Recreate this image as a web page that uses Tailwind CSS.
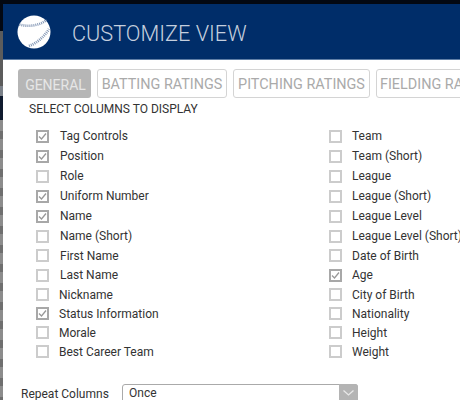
<!DOCTYPE html>
<html>
<head>
<meta charset="utf-8">
<script src="https://cdn.jsdelivr.net/npm/@tailwindcss/browser@4"></script>
</head>
<body class="m-0 bg-[#030812]">
<div class="w-[460px] h-[400px] overflow-hidden bg-[#030812] flex font-['Roboto',sans-serif]">
  <div class="w-[3px] h-[400px] shrink-0 flex flex-col">
    <div class="h-[31px] bg-[#030812]"></div>
    <div class="h-[55px] bg-[#5c5c5c]"></div>
    <div class="h-[10px] bg-[#7a8088]"></div>
    <div class="h-[24px] bg-[#101b2e]"></div>
    <div class="flex-1 bg-[repeating-linear-gradient(#8c8c8c_0,#8c8c8c_11px,#6f6f6f_11px,#6f6f6f_19px)]"></div>
  </div>
  <div class="pt-1 w-[457px] h-[400px] flex flex-col">
    <div class="h-[56px] shrink-0 bg-[#002d69] border-b border-[#5f7ea6] flex items-center pl-[14px]">
      <svg width="34" height="34" viewBox="0 0 34 34" class="shrink-0 mt-[1px]">
        <circle cx="17" cy="17" r="16.5" fill="#ffffff"/>
        <path d="M2.5 9.5 C11 12 22 11 29.5 5" fill="none" stroke="#8296b4" stroke-width="2.6" stroke-dasharray="1 1"/>
        <path d="M12 31 C20 28 27 22 32 14" fill="none" stroke="#8296b4" stroke-width="2.8" stroke-dasharray="1 1"/>
      </svg>
      <div class="ml-[21px] pt-[5px] text-[21.7px] leading-none text-[#c5cfde] font-light whitespace-nowrap">CUSTOMIZE VIEW</div>
    </div>
    <div class="flex-1 bg-white relative">
      <div class="pl-[15px] pt-[9px] flex gap-[6px] whitespace-nowrap text-[14.4px] leading-none text-[#aaaaaa]">
        <div class="h-[29px] w-[73px] shrink-0 rounded-[3px] bg-[#b6b6b6] text-[#e6e6e6] flex items-center justify-center pt-[3px] pl-[2px] text-[14px]">GENERAL</div>
        <div class="h-[29px] w-[130px] shrink-0 rounded-[3px] border border-[#d4d4d4] flex items-center justify-center pt-[3px]">BATTING RATINGS</div>
        <div class="h-[29px] w-[137px] shrink-0 rounded-[3px] border border-[#d4d4d4] flex items-center justify-center pt-[3px]">PITCHING RATINGS</div>
        <div class="h-[29px] w-[131px] shrink-0 rounded-[3px] border border-[#d4d4d4] flex items-center pl-[3px] pt-[3px]">FIELDING RATINGS</div>
      </div>
      <div class="pl-[26px] pt-[4px] text-[12px] leading-[15px] text-[#333333] whitespace-nowrap">SELECT COLUMNS TO DISPLAY</div>
      <div class="mt-[9px] flex text-[12px] leading-[20px] text-[#333333] whitespace-nowrap">
        <div class="w-[326px] pl-[33px] shrink-0 flex flex-col">
          <div class="h-[20px] flex items-center gap-[11px]"><span class="w-[13px] h-[13px] shrink-0 border-2 border-[#a8a8a8] flex items-center justify-center"><svg width="9" height="9" viewBox="0 0 9 9"><path d="M1 4.5 L3.5 7 L8 1.5" fill="none" stroke="#999999" stroke-width="1.3"/></svg></span>Tag Controls</div>
          <div class="h-[20px] flex items-center gap-[11px]"><span class="w-[13px] h-[13px] shrink-0 border-2 border-[#a8a8a8] flex items-center justify-center"><svg width="9" height="9" viewBox="0 0 9 9"><path d="M1 4.5 L3.5 7 L8 1.5" fill="none" stroke="#999999" stroke-width="1.3"/></svg></span>Position</div>
          <div class="h-[20px] flex items-center gap-[11px]"><span class="w-[13px] h-[13px] shrink-0 border-2 border-[#cccccc]"></span>Role</div>
          <div class="h-[20px] flex items-center gap-[11px]"><span class="w-[13px] h-[13px] shrink-0 border-2 border-[#a8a8a8] flex items-center justify-center"><svg width="9" height="9" viewBox="0 0 9 9"><path d="M1 4.5 L3.5 7 L8 1.5" fill="none" stroke="#999999" stroke-width="1.3"/></svg></span>Uniform Number</div>
          <div class="h-[20px] flex items-center gap-[11px]"><span class="w-[13px] h-[13px] shrink-0 border-2 border-[#a8a8a8] flex items-center justify-center"><svg width="9" height="9" viewBox="0 0 9 9"><path d="M1 4.5 L3.5 7 L8 1.5" fill="none" stroke="#999999" stroke-width="1.3"/></svg></span>Name</div>
          <div class="h-[20px] flex items-center gap-[11px]"><span class="w-[13px] h-[13px] shrink-0 border-2 border-[#cccccc]"></span>Name (Short)</div>
          <div class="h-[19px] flex items-center gap-[11px]"><span class="w-[13px] h-[13px] shrink-0 border-2 border-[#cccccc]"></span>First Name</div>
          <div class="h-[20px] flex items-center gap-[11px]"><span class="w-[13px] h-[13px] shrink-0 border-2 border-[#cccccc]"></span>Last Name</div>
          <div class="h-[19px] flex items-center gap-[10px]"><span class="w-[13px] h-[13px] shrink-0 border-2 border-[#cccccc]"></span>Nickname</div>
          <div class="h-[19px] flex items-center gap-[10px]"><span class="w-[13px] h-[13px] shrink-0 border-2 border-[#a8a8a8] flex items-center justify-center"><svg width="9" height="9" viewBox="0 0 9 9"><path d="M1 4.5 L3.5 7 L8 1.5" fill="none" stroke="#999999" stroke-width="1.3"/></svg></span>Status Information</div>
          <div class="h-[19px] flex items-center gap-[10px]"><span class="w-[13px] h-[13px] shrink-0 border-2 border-[#cccccc]"></span>Morale</div>
          <div class="h-[19px] flex items-center gap-[10px]"><span class="w-[13px] h-[13px] shrink-0 border-2 border-[#cccccc]"></span>Best Career Team</div>
        </div>
        <div class="flex-1 flex flex-col">
          <div class="h-[20px] flex items-center gap-[10px]"><span class="w-[13px] h-[13px] shrink-0 border-2 border-[#cccccc]"></span>Team</div>
          <div class="h-[20px] flex items-center gap-[10px]"><span class="w-[13px] h-[13px] shrink-0 border-2 border-[#cccccc]"></span>Team (Short)</div>
          <div class="h-[20px] flex items-center gap-[10px]"><span class="w-[13px] h-[13px] shrink-0 border-2 border-[#cccccc]"></span>League</div>
          <div class="h-[20px] flex items-center gap-[10px]"><span class="w-[13px] h-[13px] shrink-0 border-2 border-[#cccccc]"></span>League (Short)</div>
          <div class="h-[20px] flex items-center gap-[10px]"><span class="w-[13px] h-[13px] shrink-0 border-2 border-[#cccccc]"></span>League Level</div>
          <div class="h-[20px] flex items-center gap-[10px]"><span class="w-[13px] h-[13px] shrink-0 border-2 border-[#cccccc]"></span>League Level (Short)</div>
          <div class="h-[19px] flex items-center gap-[10px]"><span class="w-[13px] h-[13px] shrink-0 border-2 border-[#cccccc]"></span>Date of Birth</div>
          <div class="h-[20px] flex items-center gap-[10px]"><span class="w-[13px] h-[13px] shrink-0 border-2 border-[#a8a8a8] flex items-center justify-center"><svg width="9" height="9" viewBox="0 0 9 9"><path d="M1 4.5 L3.5 7 L8 1.5" fill="none" stroke="#999999" stroke-width="1.3"/></svg></span>Age</div>
          <div class="h-[19px] flex items-center gap-[10px]"><span class="w-[13px] h-[13px] shrink-0 border-2 border-[#cccccc]"></span>City of Birth</div>
          <div class="h-[19px] flex items-center gap-[10px]"><span class="w-[13px] h-[13px] shrink-0 border-2 border-[#cccccc]"></span>Nationality</div>
          <div class="h-[19px] flex items-center gap-[10px]"><span class="w-[13px] h-[13px] shrink-0 border-2 border-[#cccccc]"></span>Height</div>
          <div class="h-[19px] flex items-center gap-[10px]"><span class="w-[13px] h-[13px] shrink-0 border-2 border-[#cccccc]"></span>Weight</div>
        </div>
      </div>
      <div class="mt-[23px] pl-[18px] flex items-start text-[12px] text-[#333333] whitespace-nowrap">
        <div class="w-[101px] pt-[1px] leading-[18px]">Repeat Columns</div>
        <div class="w-[236px] h-[30px] shrink-0 rounded-[3px] border border-[#aaaaaa] pl-[6px] leading-[17px] relative">Once
          <span class="absolute right-[-1px] top-[-1px] w-[19px] h-[17px] bg-[#b4b4b4] rounded-tr-[3px] flex items-center justify-center"><svg width="13" height="8" viewBox="0 0 13 8"><path d="M1.5 1.5 L6.5 6 L11.5 1.5" fill="none" stroke="#e8e8e8" stroke-width="1.3"/></svg></span>
        </div>
      </div>
    </div>
  </div>
</div>
</body>
</html>
